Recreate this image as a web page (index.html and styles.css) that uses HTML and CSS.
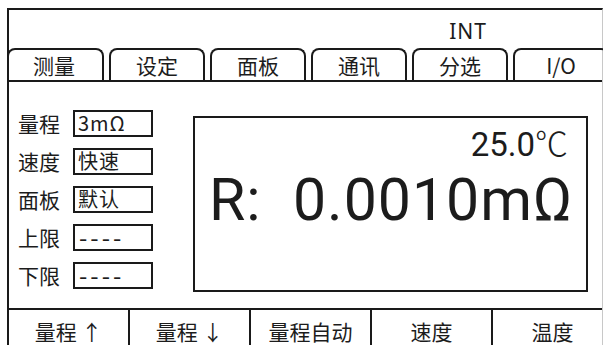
FILE: index.html
```html
<!DOCTYPE html>
<html lang="zh">
<head>
  <meta charset="UTF-8">
  <title>测量</title>
  <link rel="stylesheet" href="styles.css">
</head>
<body>
  <div class="frame">
    <div class="header">
      <span class="mode">INT</span>
    </div>

    <div class="tabs">
      <div class="tab active">测量</div>
      <div class="tab">设定</div>
      <div class="tab">面板</div>
      <div class="tab">通讯</div>
      <div class="tab">分选</div>
      <div class="tab">I/O</div>
    </div>

    <div class="content">
      <div class="params">
        <div class="row"><span class="label">量程</span><span class="value">3mΩ</span></div>
        <div class="row"><span class="label">速度</span><span class="value">快速</span></div>
        <div class="row"><span class="label">面板</span><span class="value">默认</span></div>
        <div class="row"><span class="label">上限</span><span class="value dash">----</span></div>
        <div class="row"><span class="label">下限</span><span class="value dash">----</span></div>
      </div>

      <div class="display">
        <div class="temp">25.0<span class="deg">℃</span></div>
        <div class="reading">R:&nbsp; 0.0010mΩ</div>
      </div>
    </div>

    <div class="softkeys">
      <div class="key">量程 ↑</div>
      <div class="key">量程 ↓</div>
      <div class="key">量程自动</div>
      <div class="key">速度</div>
      <div class="key">温度</div>
    </div>
  </div>
</body>
</html>
```

FILE: styles.css
```css
body {
  margin: 0;
  background: #ffffff;
  color: #1c1c1c;
  font-family: "Noto Sans CJK SC", "Noto Sans", sans-serif;
  overflow: hidden;
}

.frame {
  margin: 8px 0 0 7px;
  height: 345px;
  border-top: 2px solid #1a1a1a;
  border-left: 2px solid #1a1a1a;
  border-right: 1px solid #c8c8c8;
  box-sizing: border-box;
}

.header {
  height: 38px;
  display: flex;
  justify-content: flex-end;
  align-items: flex-end;
  padding-right: 115px;
}

.mode {
  font-family: "Noto Sans", sans-serif;
  font-size: 21px;
  line-height: 34px;
  letter-spacing: 1px;
}

.tabs {
  display: flex;
  gap: 5px;
  height: 32px;
  border-bottom: 2px solid #1a1a1a;
  margin-left: -2px;
}

.tab {
  width: 92px;
  height: 30px;
  border: 2px solid #1a1a1a;
  border-bottom: none;
  border-radius: 8px 8px 0 0;
  text-align: center;
  font-size: 21px;
  line-height: 31px;
  flex-shrink: 0;
}

.tab.active {
  width: 97px;
  height: 32px;
  margin-bottom: -2px;
  background: #ffffff;
  text-align: left;
  padding-left: 24px;
  box-sizing: border-box;
}

.content {
  display: flex;
  height: 226px;
}

.params {
  width: 184px;
  padding: 28px 0 0 9px;
  box-sizing: border-box;
  display: flex;
  flex-direction: column;
  gap: 11px;
}

.row {
  display: flex;
  align-items: center;
  height: 27px;
}

.label {
  width: 55px;
  font-size: 21px;
  margin-top: -2px;
}

.value {
  width: 80px;
  height: 27px;
  border: 2px solid #1a1a1a;
  box-sizing: border-box;
  font-size: 20px;
  line-height: 22px;
  padding-left: 3px;
  letter-spacing: 1px;
}

.value.dash {
  font-size: 24px;
  letter-spacing: 3px;
  padding-left: 4px;
}

.display {
  margin-top: 34px;
  width: 395px;
  height: 176px;
  border: 2px solid #1a1a1a;
  box-sizing: border-box;
}

.temp {
  font-family: Roboto, sans-serif;
  font-size: 33px;
  text-align: right;
  padding: 4px 18px 0 0;
  line-height: 40px;
}

.deg {
  font-family: "Noto Sans CJK SC", serif;
  font-weight: 300;
}

.reading {
  font-family: Roboto, sans-serif;
  font-size: 59px;
  line-height: 70px;
  letter-spacing: 1px;
  padding-left: 14px;
}

.softkeys {
  display: flex;
  border-top: 2px solid #1a1a1a;
}

.key {
  width: 119px;
  border-right: 2px solid #1a1a1a;
  text-align: center;
  font-size: 21px;
  line-height: 42px;
  flex-shrink: 0;
}

.key:last-child {
  border-right: none;
}
```
